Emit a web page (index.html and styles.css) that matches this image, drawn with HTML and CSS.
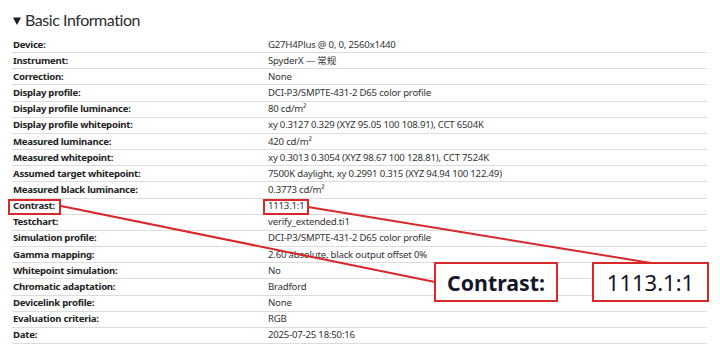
FILE: index.html
```html
<!DOCTYPE html>
<html>
<head>
<meta charset="utf-8">
<link rel="stylesheet" href="styles.css">
</head>
<body>
<div class="page">
  <h2 class="title"><svg class="tri" width="8" height="8" viewBox="0 0 8 8"><path d="M0 0.5H8L4 8Z"/></svg><span>Basic Information</span></h2>
  <table class="info">
    <tr><th>Device:</th><td>G27H4Plus @ 0, 0, 2560x1440</td></tr>
    <tr><th>Instrument:</th><td>SpyderX — 常规</td></tr>
    <tr><th>Correction:</th><td>None</td></tr>
    <tr><th>Display profile:</th><td>DCI-P3/SMPTE-431-2 D65 color profile</td></tr>
    <tr><th>Display profile luminance:</th><td>80 cd/m²</td></tr>
    <tr><th>Display profile whitepoint:</th><td>xy 0.3127 0.329 (XYZ 95.05 100 108.91), CCT 6504K</td></tr>
    <tr><th>Measured luminance:</th><td>420 cd/m²</td></tr>
    <tr><th>Measured whitepoint:</th><td>xy 0.3013 0.3054 (XYZ 98.67 100 128.81), CCT 7524K</td></tr>
    <tr><th>Assumed target whitepoint:</th><td>7500K daylight, xy 0.2991 0.315 (XYZ 94.94 100 122.49)</td></tr>
    <tr><th>Measured black luminance:</th><td>0.3773 cd/m²</td></tr>
    <tr><th>Contrast:</th><td>1113.1:1</td></tr>
    <tr><th>Testchart:</th><td>verify_extended.ti1</td></tr>
    <tr><th>Simulation profile:</th><td>DCI-P3/SMPTE-431-2 D65 color profile</td></tr>
    <tr><th>Gamma mapping:</th><td>2.60 absolute, black output offset 0%</td></tr>
    <tr><th>Whitepoint simulation:</th><td>No</td></tr>
    <tr><th>Chromatic adaptation:</th><td>Bradford</td></tr>
    <tr><th>Devicelink profile:</th><td>None</td></tr>
    <tr><th>Evaluation criteria:</th><td>RGB</td></tr>
    <tr><th>Date:</th><td>2025-07-25 18:50:16</td></tr>
  </table>

  <svg class="links" width="720" height="353" viewBox="0 0 720 353">
    <line x1="61" y1="206" x2="435" y2="282" />
    <line x1="308" y1="207" x2="651" y2="263" />
  </svg>
  <div class="mark mark-label"></div>
  <div class="mark mark-value"></div>
  <div class="callout callout-label">Contrast:</div>
  <div class="callout callout-value">1113.1:1</div>
</div>
</body>
</html>
```
FILE: styles.css
```css
html, body { margin: 0; padding: 0; background: #fff; }
body { font-family: "Noto Sans", "Noto Sans CJK SC", sans-serif; color: #333; }
.page { position: relative; width: 720px; height: 353px; padding: 0 13px 0 12px; box-sizing: border-box; overflow: hidden; }
.title { margin: 0; padding-top: 10px; height: 37px; box-sizing: border-box; display: flex; align-items: flex-start; gap: 4px; font-family: "Lato", sans-serif; font-size: 16px; font-weight: 400; line-height: 20px; letter-spacing: -0.45px; color: #2b2b2b; }
.tri { flex: none; margin: 7px 0 0 1px; fill: #1e1e1e; }
.info { width: 695px; border-collapse: collapse; font-size: 9.6px; }
.info th, .info td { height: 15.17px; padding: 0 1px; border-bottom: 1px solid #dcdcdc; text-align: left; vertical-align: middle; line-height: 12px; white-space: nowrap; }
.info th { width: 253px; font-weight: 700; color: #222; letter-spacing: -0.25px; }
.info td { color: #333; letter-spacing: -0.2px; }
.links { position: absolute; left: 0; top: 0; pointer-events: none; }
.links line { stroke: #d8282a; stroke-width: 2; }
.mark { position: absolute; border: 2px solid #d8282a; box-sizing: border-box; }
.mark-label { left: 8px; top: 199px; width: 53px; height: 16px; }
.mark-value { left: 263px; top: 199px; width: 46px; height: 16px; }
.callout { position: absolute; top: 262px; height: 40px; box-sizing: border-box; border: 2px solid #d8282a; background: #fff; display: flex; align-items: center; justify-content: center; color: #16162a; }
.callout-label { left: 434px; width: 124px; font-size: 21.3px; font-weight: 700; }
.callout-value { left: 592px; width: 117px; font-size: 22px; font-weight: 400; }
```
